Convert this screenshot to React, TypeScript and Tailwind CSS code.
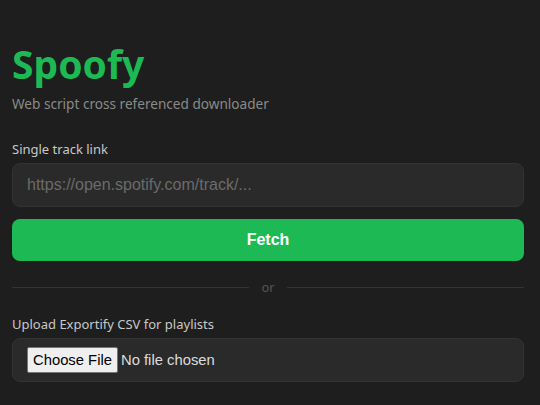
export default function App() {
  return (
    <div className="min-h-[405px] bg-[#1e1e1e] pl-3 pr-4 pt-[38px] font-['Noto_Sans',sans-serif]">
      <h1 className="text-[39px] font-bold leading-[52px] text-[#1db954]">Spoofy</h1>
      <p className="mt-[4px] text-[13.6px] text-[#8a8a8a]">Web script cross referenced downloader</p>

      <label className="mt-[26px] block text-[13px] text-[#c8c8c8]">Single track link</label>
      <input
        type="text"
        placeholder="https://open.spotify.com/track/..."
        className="mt-[3px] block h-[44px] w-full rounded-lg border border-[#333] bg-[#2a2a2a] px-[14px] font-['Liberation_Sans',sans-serif] text-base text-white outline-none placeholder:text-[#6b6b6b]"
      />
      <button className="mt-[12px] block h-[42px] w-full rounded-lg bg-[#1db954] font-['Liberation_Sans',sans-serif] text-base font-bold text-white">
        Fetch
      </button>

      <div className="mt-[17px] flex items-center gap-3">
        <div className="h-px flex-1 bg-[#333]" />
        <span className="text-[13px] text-[#555]">or</span>
        <div className="h-px flex-1 bg-[#333]" />
      </div>

      <label className="mt-[18px] block text-[13px] text-[#c8c8c8]">Upload Exportify CSV for playlists</label>
      <div className="mt-[3px] flex h-[44px] items-center rounded-lg border border-[#333] bg-[#2a2a2a] px-[14px]">
        <input
          type="file"
          accept=".csv"
          className="font-['Liberation_Sans',sans-serif] text-[14.8px] text-[#ddd] file:mr-[3px] file:rounded-[2px] file:border file:border-[#767676] file:bg-[#efefef] file:px-[5px] file:py-[1px] file:text-black"
        />
      </div>
    </div>
  );
}
